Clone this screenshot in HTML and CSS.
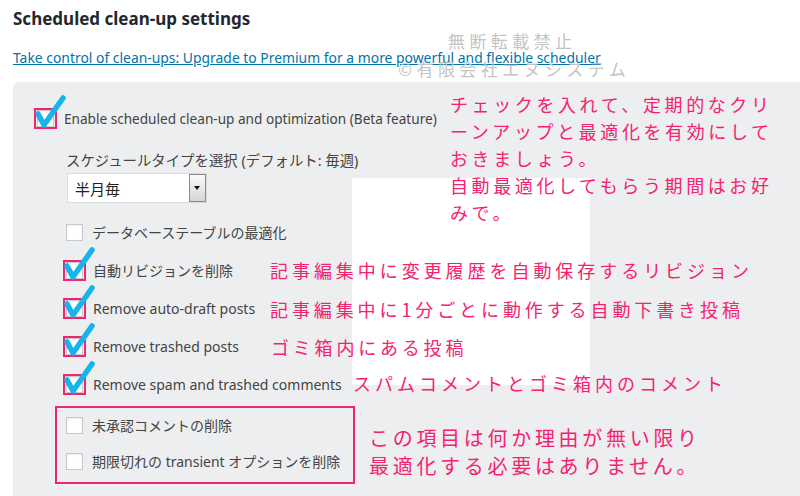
FILE: index.html
```html
<!DOCTYPE html>
<html lang="ja">
<head>
    <meta charset="UTF-8">
    <title>Scheduled clean-up settings</title>
    <link rel="stylesheet" href="styles.css">
</head>
<body>
    <div class="page">
        <h2 class="title">Scheduled clean-up settings</h2>
        <p class="promo"><a href="#">Take control of clean-ups: Upgrade to Premium for a more powerful and flexible scheduler</a></p>

        <!-- watermark over the header -->
        <div class="stamp">
            <span class="stamp-top">無断転載禁止</span>
            <span class="stamp-bottom">©有限会社エヌシステム</span>
        </div>

        <div class="panel">
            <div class="paste"></div>

            <label class="opt opt-main">
                <span class="mark"><span class="box"></span><svg class="tick" viewBox="0 0 34 34"><polyline points="4,18 10,29 29,2"/></svg></span>
                Enable scheduled clean-up and optimization (Beta feature)
            </label>

            <div class="schedule">
                <div class="schedule-label">スケジュールタイプを選択 (デフォルト: 毎週)</div>
                <div class="select">
                    <span class="select-value">半月毎</span>
                    <span class="select-btn"></span>
                </div>
            </div>

            <div class="opts">
                <label class="opt"><span class="box"></span>データベーステーブルの最適化</label>
                <label class="opt">
                    <span class="mark"><span class="box"></span><svg class="tick" viewBox="0 0 34 34"><polyline points="4,18 10,29 29,2"/></svg></span>
                    自動リビジョンを削除
                </label>
                <label class="opt">
                    <span class="mark"><span class="box"></span><svg class="tick" viewBox="0 0 34 34"><polyline points="4,18 10,29 29,2"/></svg></span>
                    Remove auto-draft posts
                </label>
                <label class="opt">
                    <span class="mark"><span class="box"></span><svg class="tick" viewBox="0 0 34 34"><polyline points="4,18 10,29 29,2"/></svg></span>
                    Remove trashed posts
                </label>
                <label class="opt">
                    <span class="mark"><span class="box"></span><svg class="tick" viewBox="0 0 34 34"><polyline points="4,18 10,29 29,2"/></svg></span>
                    Remove spam and trashed comments
                </label>

                <div class="group">
                    <label class="opt"><span class="box"></span>未承認コメントの削除</label>
                    <label class="opt"><span class="box"></span>期限切れの transient オプションを削除</label>
                </div>
            </div>

            <!-- hand-written notes -->
            <div class="note note-enable">チェックを入れて、定期的なクリ<br>ーンアップと最適化を有効にして<br>おきましょう。<br>自動最適化してもらう期間はお好<br>みで。</div>
            <div class="note note-rev">記事編集中に変更履歴を自動保存するリビジョン</div>
            <div class="note note-draft">記事編集中に1分ごとに動作する自動下書き投稿</div>
            <div class="note note-trash">ゴミ箱内にある投稿</div>
            <div class="note note-spam">スパムコメントとゴミ箱内のコメント</div>
            <div class="note note-group">この項目は何か理由が無い限り<br>最適化する必要はありません。</div>
        </div>
    </div>
</body>
</html>
```

FILE: styles.css
```css
html, body {
    margin: 0;
    padding: 0;
    background-color: #fff;
    overflow: hidden;
}
.page {
    position: relative;
    height: 496px;
    overflow: hidden;
    font-family: "Noto Sans", "Noto Sans CJK JP", sans-serif;
    color: #3c4146;
}
.title {
    margin: 0;
    padding: 7px 0 0 13px;
    font-size: 17px;
    line-height: 24px;
    font-weight: bold;
    color: #23282d;
}
.promo {
    margin: 0;
    padding: 18px 0 0 13px;
    font-size: 13.9px;
    line-height: 18px;
}
.promo a {
    color: #0073aa;
    text-decoration: underline;
}
.stamp {
    position: absolute;
    left: 398px;
    top: 27px;
    width: 240px;
    font-family: "Noto Sans CJK JP", sans-serif;
    color: #c4c4c4;
    font-size: 17px;
    line-height: 28px;
    letter-spacing: 4.4px;
}
.stamp span {
    display: block;
}
.stamp-top {
    padding-left: 50px;
}
.panel {
    position: relative;
    margin: 15px 0 0 13px;
    padding: 17px 0 0 21px;
    height: 500px;
    background-color: #edeef0;
    border-radius: 6px 0 0 0;
}
.paste {
    position: absolute;
    left: 339px;
    top: 96px;
    width: 238px;
    height: 207px;
    background-color: #fff;
}
.opt {
    display: flex;
    align-items: center;
    height: 38px;
    font-size: 14px;
    color: #444;
}
.opt-main {
    font-size: 13.6px;
}
.box {
    display: inline-block;
    flex: none;
    width: 15px;
    height: 15px;
    border: 1px solid #c6c9cc;
    background-color: #fff;
    margin-right: 9px;
    box-shadow: inset 0 1px 2px rgba(0,0,0,0.08);
}
.mark {
    position: relative;
    flex: none;
    display: inline-flex;
    width: 19px;
    height: 17px;
    border: 2px solid #f2236f;
    margin-right: 7px;
}
.mark .box {
    margin: 0 0 0 1px;
}
.tick {
    position: absolute;
    left: -2px;
    top: -14px;
    width: 34px;
    height: 34px;
    overflow: visible;
}
.tick polyline {
    fill: none;
    stroke: #17b4ec;
    stroke-width: 5.5;
    stroke-linecap: round;
    stroke-linejoin: round;
}
.schedule {
    padding: 14px 0 0 32px;
}
.schedule-label {
    font-size: 14.4px;
    line-height: 20px;
    color: #444;
}
.select {
    display: flex;
    align-items: center;
    justify-content: space-between;
    width: 138px;
    height: 28px;
    margin-top: 2px;
    margin-left: 1px;
    border: 1px solid #dcdcde;
    background-color: #fff;
}
.select-value {
    padding-left: 7px;
    font-size: 15px;
    color: #222;
}
.select-btn {
    position: relative;
    width: 15px;
    height: 26px;
    border: 1px solid #8a8a8a;
    background: linear-gradient(#fafafa, #d6d6d6);
}
.select-btn::after {
    content: "";
    position: absolute;
    left: 4px;
    top: 11px;
    border-left: 3px solid transparent;
    border-right: 3px solid transparent;
    border-top: 4px solid #111;
}
.opts {
    padding: 10px 0 0 29px;
}
.opts > .opt > .box {
    margin-left: 3px;
}
.group {
    width: 287px;
    margin: 3px 0 0 -8px;
    padding: 0 0 2px 9px;
    border: 2px solid #f2236f;
}
.group .opt:first-child {
    height: 34px;
}
.group .opt .box {
    margin-left: 0;
}
.note {
    position: absolute;
    font-family: "Noto Sans CJK JP", sans-serif;
    color: #f5226f;
    font-size: 18px;
    line-height: 27px;
    letter-spacing: 3.6px;
    white-space: nowrap;
}
.note-enable {
    left: 437px;
    top: 9px;
}
.note-rev {
    left: 257px;
    top: 175px;
    letter-spacing: 3.95px;
}
.note-draft {
    left: 257px;
    top: 214px;
    letter-spacing: 3.9px;
}
.note-trash {
    left: 258px;
    top: 252px;
    letter-spacing: 3.8px;
}
.note-spam {
    left: 340px;
    top: 288px;
    letter-spacing: 4px;
}
.note-group {
    left: 356px;
    top: 342px;
    font-size: 20px;
    line-height: 28px;
    letter-spacing: 3.7px;
}
```
